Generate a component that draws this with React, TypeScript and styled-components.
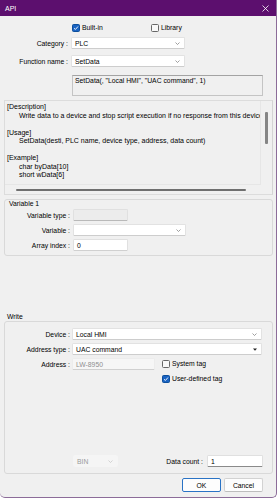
import * as React from "react"
import styled, { createGlobalStyle } from "styled-components"

const GlobalStyle = createGlobalStyle`
  html, body {
    margin: 0;
    padding: 0;
    background: #ffffff;
  }
  body {
    font-family: "Liberation Sans", Arial, sans-serif;
    font-size: 6.8px;
    color: #000;
  }
  * { box-sizing: border-box; }
`

const Window = styled.div`
  width: 277px;
  height: 498px;
  display: flex;
  flex-direction: column;
  background: #f0f0f0;
  border-right: 1px solid #8c6c99;
  border-bottom: 1px solid #8c6c99;
  border-bottom-right-radius: 5px;
  border-bottom-left-radius: 5px;
  overflow: hidden;
`

const TitleBar = styled.div`
  height: 16px;
  flex: none;
  display: flex;
  align-items: center;
  justify-content: space-between;
  padding: 0 7px 0 5px;
  background: #5c0f6e;
  color: #ffffff;
  font-size: 7px;
`

const Body = styled.div`
  flex: 1;
  display: flex;
  flex-direction: column;
  padding: 0 3px 0 4px;
`

const CheckRow = styled.div`
  display: flex;
  margin-top: 8px;
  padding-left: 68px;
  height: 8px;
`

const CheckItem = styled.div<{ $width?: number; $left?: number }>`
  display: flex;
  align-items: center;
  gap: 2px;
  height: 8px;
  line-height: 8px;
  white-space: nowrap;
  flex: none;
  width: ${p => (p.$width ? `${p.$width}px` : "auto")};
  margin-left: ${p => p.$left ?? 0}px;
`

const Box = styled.span<{ $checked?: boolean }>`
  width: 8px;
  height: 8px;
  flex: none;
  border-radius: 1.5px;
  border: 1px solid ${p => (p.$checked ? "#0d4f9c" : "#676767")};
  background: ${p => (p.$checked ? "#1a63c2" : "#f8f8f8")};
  display: flex;
  align-items: center;
  justify-content: center;
`

const FormRow = styled.div<{ $label: number; $gap: number; $top?: number }>`
  display: grid;
  grid-template-columns: ${p => p.$label}px auto;
  column-gap: ${p => p.$gap}px;
  align-items: center;
  height: 12px;
  flex: none;
  margin-top: ${p => p.$top ?? 0}px;
`

const Label = styled.span`
  text-align: right;
  white-space: nowrap;
`

const Select = styled.div<{ $w: number; $disabled?: boolean }>`
  width: ${p => p.$w}px;
  height: 12px;
  display: flex;
  align-items: center;
  justify-content: space-between;
  padding: 0 4px 0 3px;
  background: ${p => (p.$disabled ? "#f5f5f5" : "#ffffff")};
  color: ${p => (p.$disabled ? "#9a9a9a" : "#000")};
  border: 1px solid ${p => (p.$disabled ? "#f5f5f5" : "#e2e2e2")};
  border-bottom-color: ${p => (p.$disabled ? "#f5f5f5" : "#cdcdcd")};
  border-radius: 1.5px;
  white-space: nowrap;
`

const Field = styled.div<{ $w: number; $variant: "input" | "disabled" | "readonly" | "underline" }>`
  width: ${p => p.$w}px;
  height: 12px;
  flex: none;
  display: flex;
  align-items: center;
  padding: 0 3px;
  white-space: nowrap;
  border-radius: 1.5px;
  background: ${p =>
    p.$variant === "input" || p.$variant === "underline" ? "#ffffff" : p.$variant === "disabled" ? "#f6f6f6" : "#ececec"};
  color: ${p => (p.$variant === "disabled" ? "#8f8f8f" : "#000")};
  border: 1px solid ${p => (p.$variant === "disabled" ? "#ececec" : "#e0e0e0")};
  border-bottom: ${p =>
    p.$variant === "underline" ? "1.5px solid #8a8a8a" : p.$variant === "readonly" ? "1px solid #b9b9b9" : "1px solid #d0d0d0"};
`

const Signature = styled.div`
  margin: 8px 0 0 68px;
  width: 191px;
  height: 21px;
  flex: none;
  padding: 0 2px;
  line-height: 9px;
  background: #f0f0f0;
  border: 1px solid #c4c4c4;
  border-top-color: #a3a3a3;
  white-space: nowrap;
`

const DescPanel = styled.div`
  margin-top: 4px;
  height: 95px;
  flex: none;
  display: grid;
  grid-template-columns: 1fr 11px;
  grid-template-rows: 84px 10px;
  border: 1px solid #dcdcdc;
  border-right-color: #d4d4d4;
`

const DescText = styled.div`
  padding: 2px 2px 0 2px;
  font-size: 7px;
  line-height: 8.5px;
  border-right: 1px solid #e6e6e6;
  border-bottom: 1px solid #e6e6e6;
  overflow: hidden;
  white-space: nowrap;
`

const DescLine = styled.div<{ $indent?: boolean }>`
  height: 8.5px;
  padding-left: ${p => (p.$indent ? 12 : 0)}px;
`

const VScroll = styled.div`
  padding: 11px 0 0 4px;
`

const VThumb = styled.div`
  width: 2.5px;
  height: 32px;
  border-radius: 1px;
  background: #858585;
`

const HScroll = styled.div`
  padding: 4px 0 0 11px;
`

const HThumb = styled.div`
  width: 230px;
  height: 2px;
  border-radius: 1px;
  background: #6f6f6f;
`

const Group = styled.div<{ $h: number; $top: number }>`
  margin-top: ${p => p.$top}px;
  height: ${p => p.$h}px;
  flex: none;
  display: flex;
  flex-direction: column;
  border: 1px solid #d9d9d9;
  border-radius: 3px;
`

const GroupTitle = styled.div<{ $pad: number; $top?: number }>`
  height: 8px;
  line-height: 8px;
  flex: none;
  padding-left: ${p => p.$pad}px;
  margin-top: ${p => p.$top ?? 0}px;
`

const GroupRows = styled.div<{ $padTop: number }>`
  flex: 1;
  display: flex;
  flex-direction: column;
  padding: ${p => p.$padTop}px 0 6px 0;
`

const FieldWithCheck = styled.div`
  display: flex;
  align-items: center;
`

const CheckOnlyRow = styled.div`
  height: 12px;
  margin-top: 3px;
  display: flex;
  align-items: center;
  padding-left: 157px;
`

const BottomRow = styled.div`
  margin-top: auto;
  height: 12px;
  display: flex;
  align-items: center;
  padding: 0 9px 0 68px;
`

const DataCount = styled.div`
  margin-left: auto;
  display: flex;
  align-items: center;
  gap: 4px;
  white-space: nowrap;
`

const ButtonRow = styled.div`
  margin-top: 4px;
  height: 14px;
  flex: none;
  display: flex;
  justify-content: flex-end;
  gap: 3px;
  padding-right: 10px;
`

const Button = styled.div<{ $primary?: boolean }>`
  width: 39px;
  height: 14px;
  display: flex;
  align-items: center;
  justify-content: center;
  background: #fdfdfd;
  border: 1px solid ${p => (p.$primary ? "#2a73c5" : "#d2d2d2")};
  border-bottom-color: ${p => (p.$primary ? "#2a73c5" : "#bdbdbd")};
  border-radius: 2px;
`

const Chevron = ({ color = "#777" }: { color?: string }) => (
  <svg width="5" height="3" viewBox="0 0 5 3">
    <polyline points="0.5,0.5 2.5,2.5 4.5,0.5" fill="none" stroke={color} strokeWidth="0.7" />
  </svg>
)

const Triangle = () => (
  <svg width="4" height="3" viewBox="0 0 4 3">
    <polygon points="0,0.5 4,0.5 2,2.8" fill="#222" />
  </svg>
)

const Check = ({ checked, label, width, left }: { checked?: boolean; label: string; width?: number; left?: number }) => (
  <CheckItem $width={width} $left={left}>
    <Box $checked={checked}>
      {checked && (
        <svg width="6" height="6" viewBox="0 0 6 6">
          <polyline points="1,3.2 2.4,4.5 5,1.5" fill="none" stroke="#ffffff" strokeWidth="0.9" />
        </svg>
      )}
    </Box>
    {label}
  </CheckItem>
)

const App = () => {
  return (
    <>
      <GlobalStyle />
      <Window>
        <TitleBar>
          <span>API</span>
          <svg width="7" height="7" viewBox="0 0 7 7">
            <path d="M0.5 0.5 L6.5 6.5 M6.5 0.5 L0.5 6.5" stroke="#ffffff" strokeWidth="0.8" />
          </svg>
        </TitleBar>
        <Body>
          <CheckRow>
            <Check checked label="Built-in" width={79} />
            <Check label="Library" />
          </CheckRow>

          <FormRow $label={64} $gap={3} $top={5}>
            <Label>Category :</Label>
            <Select $w={114}>
              PLC <Chevron />
            </Select>
          </FormRow>
          <FormRow $label={64} $gap={3} $top={6}>
            <Label>Function name :</Label>
            <Select $w={114}>
              SetData <Chevron />
            </Select>
          </FormRow>

          <Signature>SetData(, "Local HMI", "UAC command", 1)</Signature>

          <DescPanel>
            <DescText>
              <DescLine>[Description]</DescLine>
              <DescLine $indent>Write data to a device and stop script execution if no response from this device</DescLine>
              <DescLine />
              <DescLine>[Usage]</DescLine>
              <DescLine $indent>SetData(desti, PLC name, device type, address, data count)</DescLine>
              <DescLine />
              <DescLine>[Example]</DescLine>
              <DescLine $indent>char byData[10]</DescLine>
              <DescLine $indent>short wData[6]</DescLine>
            </DescText>
            <VScroll>
              <VThumb />
            </VScroll>
            <HScroll>
              <HThumb />
            </HScroll>
          </DescPanel>

          <Group $h={57} $top={4}>
            <GroupTitle $pad={4}>Variable 1</GroupTitle>
            <GroupRows $padTop={1}>
              <FormRow $label={65} $gap={3}>
                <Label>Variable type :</Label>
                <Field $w={55} $variant="readonly" />
              </FormRow>
              <FormRow $label={65} $gap={3} $top={3}>
                <Label>Variable :</Label>
                <Select $w={113}>
                  <span />
                  <Chevron />
                </Select>
              </FormRow>
              <FormRow $label={65} $gap={3} $top={3}>
                <Label>Array index :</Label>
                <Field $w={55} $variant="input">0</Field>
              </FormRow>
            </GroupRows>
          </Group>

          <GroupTitle $pad={3} $top={57}>Write</GroupTitle>
          <Group $h={153} $top={0}>
            <GroupRows $padTop={6}>
              <FormRow $label={65} $gap={2}>
                <Label>Device :</Label>
                <Select $w={190}>
                  Local HMI <Chevron />
                </Select>
              </FormRow>
              <FormRow $label={65} $gap={2} $top={3}>
                <Label>Address type :</Label>
                <Select $w={190}>
                  UAC command <Triangle />
                </Select>
              </FormRow>
              <FormRow $label={65} $gap={2} $top={3}>
                <Label>Address :</Label>
                <FieldWithCheck>
                  <Field $w={83} $variant="disabled">LW-8950</Field>
                  <Check label="System tag" left={7} />
                </FieldWithCheck>
              </FormRow>
              <CheckOnlyRow>
                <Check checked label="User-defined tag" />
              </CheckOnlyRow>
              <BottomRow>
                <Select $w={45} $disabled>
                  BIN <Chevron color="#c4c4c4" />
                </Select>
                <DataCount>
                  Data count :
                  <Field $w={56} $variant="underline">1</Field>
                </DataCount>
              </BottomRow>
            </GroupRows>
          </Group>

          <ButtonRow>
            <Button $primary>OK</Button>
            <Button>Cancel</Button>
          </ButtonRow>
        </Body>
      </Window>
    </>
  )
}

export default App
